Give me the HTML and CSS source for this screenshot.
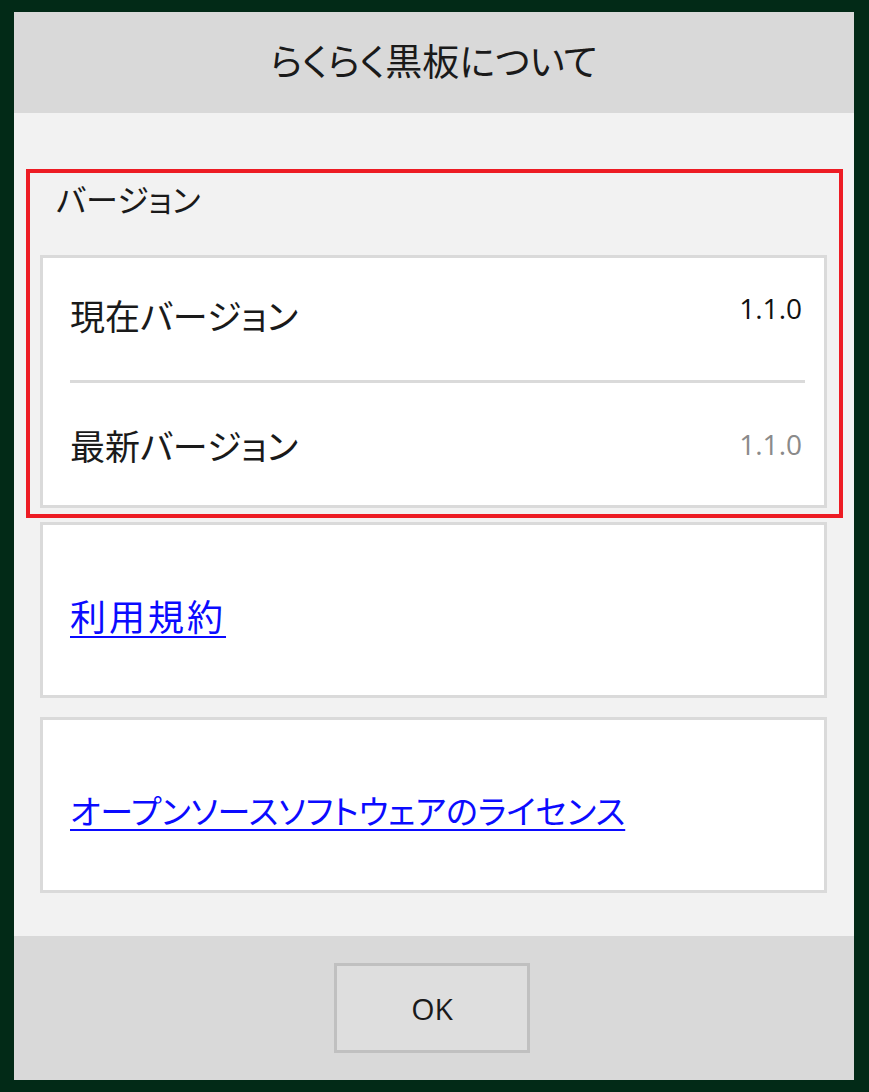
FILE: index.html
```html
<!DOCTYPE html>
<html lang="ja">
<head>
    <meta charset="UTF-8">
    <meta name="viewport" content="width=device-width, initial-scale=1.0">
    <title>らくらく黒板について</title>
    <link rel="stylesheet" href="styles.css">
</head>
<body>
    <div class="dialog">
        <div class="dialog-header">らくらく黒板について</div>

        <div class="dialog-body">
            <div class="version-section">
                <div class="section-label">バージョン</div>
                <div class="card version-card">
                    <div class="version-row first">
                        <span class="row-name">現在バージョン</span>
                        <span class="row-value">1.1.0</span>
                    </div>
                    <div class="divider"></div>
                    <div class="version-row">
                        <span class="row-name">最新バージョン</span>
                        <span class="row-value muted">1.1.0</span>
                    </div>
                </div>
            </div>

            <div class="card link-card">
                <a href="#" class="link wide">利用規約</a>
            </div>

            <div class="card link-card">
                <a href="#" class="link">オープンソースソフトウェアのライセンス</a>
            </div>
        </div>

        <div class="dialog-footer">
            <button type="button" class="ok-button">OK</button>
        </div>
    </div>
</body>
</html>
```

FILE: styles.css
```css
/* About dialog */
body {
    margin: 0;
    padding: 12px 15px 12px 14px;
    background-color: #022a17;
    font-family: "Noto Sans CJK JP", "Noto Sans", sans-serif;
    font-feature-settings: "palt";
    color: #1a1a1a;
}

.dialog {
    width: 840px;
    height: 1068px;
    display: flex;
    flex-direction: column;
    background-color: #f2f2f2;
}

.dialog-header {
    height: 101px;
    box-sizing: border-box;
    padding-bottom: 6px;
    flex-shrink: 0;
    display: flex;
    align-items: center;
    justify-content: center;
    background-color: #d9d9d9;
    font-size: 37px;
}

.dialog-body {
    flex: 1;
    padding: 56px 27px 0 26px;
}

.version-section {
    margin: 0 -16px 0 -14px;
    padding: 0 12px 6px 10px;
    border: 4px solid #ed1c24;
}

.section-label {
    height: 82px;
    box-sizing: border-box;
    padding: 3px 0 0 16px;
    font-size: 32px;
    line-height: 44px;
}

.card {
    background-color: #fff;
    border: 3px solid #dadada;
}

.version-row {
    height: 122px;
    box-sizing: border-box;
    display: flex;
    align-items: center;
    justify-content: space-between;
    padding: 0 22px 0 27px;
}

.version-row.first {
    padding-bottom: 10px;
}

.version-row.first .row-value {
    margin-bottom: 12px;
}

.version-row + .version-row {
    padding-bottom: 2px;
}

.row-name {
    font-size: 35px;
}

.row-value {
    font-family: "Open Sans", "Noto Sans", sans-serif;
    font-size: 28px;
    color: #111;
}

.row-value.muted {
    color: #8a8a8a;
}

.divider {
    height: 3px;
    margin: 0 19px 0 27px;
    background-color: #dadada;
}

.link-card {
    height: 160px;
    display: flex;
    align-items: center;
    padding: 10px 0 0 27px;
    margin-top: 4px;
}

.link-card + .link-card {
    margin-top: 19px;
}

.link {
    font-size: 33px;
    color: #0b0bff;
    text-decoration: underline;
    text-decoration-thickness: 2px;
    text-underline-offset: 5px;
}

.link.wide {
    font-size: 36px;
    letter-spacing: 3px;
}

.dialog-footer {
    height: 144px;
    flex-shrink: 0;
    display: flex;
    align-items: center;
    justify-content: center;
    background-color: #d9d9d9;
}

.ok-button {
    width: 196px;
    height: 90px;
    margin-right: 4px;
    background-color: #dedede;
    border: 3px solid #c0c0c0;
    font-family: "Open Sans", "Noto Sans", sans-serif;
    font-size: 30px;
    color: #1a1a1a;
}
```
